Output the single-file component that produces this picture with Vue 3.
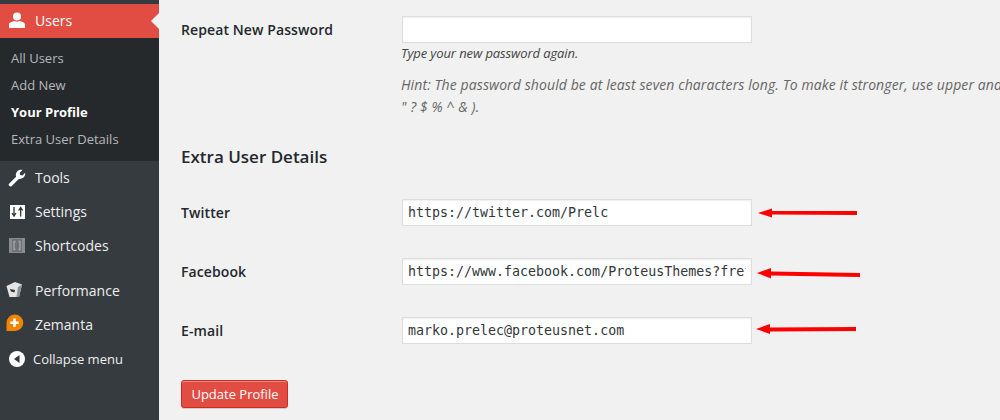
<script setup>
const subItems = [
  { label: 'All Users' },
  { label: 'Add New' },
  { label: 'Your Profile', current: true },
  { label: 'Extra User Details' },
]

const fields = [
  { label: 'Twitter', value: 'https://twitter.com/Prelc', arrow: 'M101 12 V16 L16 15.6 V18.5 L2 14 L16 9.5 V12 Z' },
  { label: 'Facebook', value: 'https://www.facebook.com/ProteusThemes?fref=ts', arrow: 'M104 15 V19 L15 17.6 V20.5 L1 15 L15 10 V13.4 Z' },
  { label: 'E-mail', value: 'marko.prelec@proteusnet.com', arrow: 'M100 10 V14 L14 14.6 V17 L0 12 L14 7 V10.6 Z' },
]
</script>

<template>
  <div class="page">
    <aside class="sidebar">
      <div class="menu-item active">
        <svg class="icon" viewBox="0 0 20 20" width="20" height="20">
          <circle cx="10" cy="5.5" r="4" fill="#fff" />
          <path d="M2 17 V13.5 C2 11.5 5 10.8 7.5 10 C9 11 11 11 12.5 10 C15 10.8 18 11.5 18 13.5 V17 Z" fill="#fff" />
        </svg>
        <span>Users</span>
        <i class="pointer"></i>
      </div>
      <ul class="submenu">
        <li v-for="item in subItems" :key="item.label" :class="{ current: item.current }">{{ item.label }}</li>
      </ul>

      <div class="menu-item">
        <svg class="icon" viewBox="-1 -1 22 22" width="20" height="20">
          <path d="M1 16.5 L9 8.5 C8 5 10 1.5 14 1 C15 1 15.5 1 16 1.2 L13 4.2 L13.5 6.8 L16 7.2 L19 4.3 C19.6 8 16.5 11.5 12 11 L4 19 C3 20 0 18 1 16.5 Z" fill="#fff" />
        </svg>
        <span>Tools</span>
      </div>
      <div class="menu-item">
        <svg class="icon" viewBox="0 0 20 20" width="20" height="20">
          <rect x="3" y="3" width="15" height="14" fill="#fff" />
          <path d="M7 5 V13 M5 11 L7 14 L9 11 M13.7 14.5 V6.5 M11.7 8.5 L13.7 5.5 L15.7 8.5" stroke="#32373c" stroke-width="1.3" fill="none" />
        </svg>
        <span>Settings</span>
      </div>
      <div class="menu-item">
        <svg class="icon" viewBox="0 0 20 20" width="20" height="20">
          <rect x="2" y="2" width="16" height="15" fill="#8a8c8e" />
          <rect x="5" y="3" width="10" height="13" fill="#6f7274" />
          <path d="M8.5 5.5 H7 V13.5 H8.5 M11.5 5.5 H13 V13.5 H11.5" stroke="#a3a5a6" stroke-width="1.4" fill="none" />
        </svg>
        <span>Shortcodes</span>
      </div>

      <div class="menu-item plugin performance">
        <svg class="icon" viewBox="0 0 20 20" width="20" height="20">
          <path d="M0.5 5 L9 1 L16 3.5 L13 16 L3.5 16 Z" fill="#e4e4e4" />
          <path d="M12 6 L16 3.5 L13 16 L10.5 16 Z" fill="#8e9091" />
          <path d="M4 8 L9 9 L8.5 11.5 L5 10.5 Z" fill="#333" />
        </svg>
        <span>Performance</span>
      </div>
      <div class="menu-item plugin zemanta">
        <svg class="icon" viewBox="0 0 18 18" width="18" height="18">
          <path d="M9 0.5 A8.2 8.2 0 0 1 9 17 H0.5 V9 A8.5 8.5 0 0 1 9 0.5 Z" fill="#f18500" />
          <path d="M8.5 4.5 V13 M4.3 8.7 H12.7" stroke="#fff" stroke-width="2.6" />
        </svg>
        <span>Zemanta</span>
      </div>
      <div class="collapse">
        <svg viewBox="0 0 16 16" width="16" height="16">
          <circle cx="8" cy="8" r="8" fill="#fff" />
          <path d="M10.5 4 V12 L5 8 Z" fill="#32373c" />
        </svg>
        <span>Collapse menu</span>
      </div>
    </aside>

    <main class="content">
      <div class="row">
        <label>Repeat New Password</label>
        <div>
          <input class="input" type="password" readonly />
          <p class="desc">Type your new password again.</p>
          <p class="hint">Hint: The password should be at least seven characters long. To make it stronger, use upper and lower case letters, numbers, and symbols like !<br>" ? $ % ^ &amp; ).</p>
        </div>
      </div>

      <h3>Extra User Details</h3>

      <div v-for="field in fields" :key="field.label" class="row field">
        <label>{{ field.label }}</label>
        <input class="input mono" type="text" :value="field.value" readonly />
        <svg class="arrow" viewBox="0 0 106 26" width="106" height="26">
          <path :d="field.arrow" fill="#f00" />
        </svg>
      </div>

      <button class="update" type="button">Update Profile</button>
    </main>
  </div>
</template>

<style>
html,
body {
  margin: 0;
  background: #f1f1f1;
  overflow: hidden;
}
</style>

<style scoped>
.page {
  display: flex;
  width: 1000px;
  height: 420px;
  overflow: hidden;
  background: #f1f1f1;
  font-family: "Open Sans", sans-serif;
  color: #32373c;
}

.sidebar {
  flex: 0 0 159px;
  padding-top: 4px;
  box-sizing: border-box;
  background: #363b3f;
  color: #eee;
  font-size: 14px;
}

.menu-item {
  position: relative;
  display: flex;
  align-items: center;
  height: 34px;
  padding-left: 7px;
}

.menu-item span {
  margin-bottom: 2px;
}

.menu-item .icon {
  flex: none;
  margin-right: 8px;
}

.menu-item.active {
  background: #e14d43;
  color: #fff;
}

.pointer {
  position: absolute;
  right: 0;
  top: 9px;
  border: 8px solid transparent;
  border-right-color: #f1f1f1;
  border-left-width: 0;
}

.submenu {
  list-style: none;
  margin: 0;
  padding: 7px 0 8px;
  background: #26292c;
  color: #b4b9be;
  font-size: 13px;
}

.submenu li {
  height: 27px;
  line-height: 27px;
  padding-left: 11px;
}

.submenu li.current {
  color: #fff;
  font-weight: 700;
}

.plugin {
  padding-left: 6px;
}

.plugin .icon {
  margin-right: 9px;
}

.zemanta .icon {
  margin-top: -4px;
  margin-right: 11px;
}

.performance {
  margin-top: 11px;
}

.collapse {
  display: flex;
  align-items: center;
  gap: 8px;
  height: 34px;
  padding-left: 9px;
  font-size: 13px;
  color: #eee;
}

.content {
  flex: 1;
  min-width: 0;
  padding: 16px 0 0 22px;
}

.row {
  display: grid;
  grid-template-columns: 221px 350px auto;
  align-items: start;
}

.row label {
  font-size: 14px;
  font-weight: 600;
  letter-spacing: 0.1px;
  color: #23282d;
  line-height: 27px;
}

.input {
  display: block;
  box-sizing: border-box;
  width: 350px;
  height: 27px;
  margin: 0;
  padding: 0 5px;
  background: #fff;
  border: 1px solid #ddd;
  border-radius: 0;
  outline: none;
  box-shadow: inset 0 1px 2px rgba(0, 0, 0, 0.07);
}

.mono {
  font-family: "DejaVu Sans Mono", monospace;
  font-size: 13.3px;
  color: #32373c;
}

.desc,
.hint {
  margin: 0 0 0 -1px;
  font-style: italic;
  white-space: nowrap;
}

.desc {
  font-size: 13px;
  letter-spacing: -0.1px;
  line-height: 20px;
  color: #444;
}

.hint {
  margin-top: 11px;
  font-size: 14px;
  letter-spacing: 0.1px;
  line-height: 22px;
  color: #666;
}

h3 {
  margin: 28px 0 -1px;
  font-size: 17px;
  font-weight: 600;
  line-height: 22px;
  color: #23282d;
}

.field {
  margin-top: 32px;
}

.arrow {
  margin-left: 4px;
}

.update {
  display: block;
  box-sizing: border-box;
  width: 107px;
  height: 28px;
  margin-top: 36px;
  padding: 0 0 0 1px;
  border: 1px solid #d02a21;
  border-radius: 3px;
  background: #e14d43;
  box-shadow: inset 0 1px 0 #ec8a85, 0 1px 0 rgba(0, 0, 0, 0.15);
  color: #fff;
  font-family: inherit;
  font-size: 13px;
}
</style>
